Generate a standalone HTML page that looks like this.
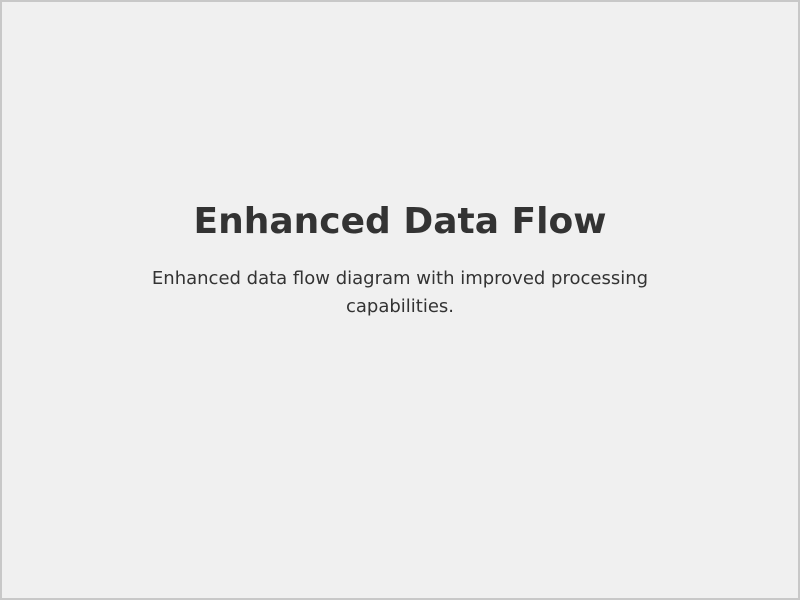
<!DOCTYPE html>
<html>
<head>
<style>
html,body{margin:0;padding:0;}
body{width:800px;height:600px;background:#f0f0f0;font-family:"DejaVu Sans","Liberation Sans",sans-serif;color:#333;}
.frame{box-sizing:border-box;width:800px;height:600px;border:2px solid #c8c8c8;position:relative;}
h1{position:absolute;left:0;right:0;top:198px;margin:0;text-align:center;font-size:36px;font-weight:bold;line-height:44px;color:#333;}
p{position:absolute;left:130px;right:130px;top:263px;margin:0;text-align:center;font-size:18px;line-height:28px;color:#333;}
</style>
</head>
<body>
<div class="frame">
<h1>Enhanced Data Flow</h1>
<p>Enhanced data flow diagram with improved processing capabilities.</p>
</div>
</body>
</html>
